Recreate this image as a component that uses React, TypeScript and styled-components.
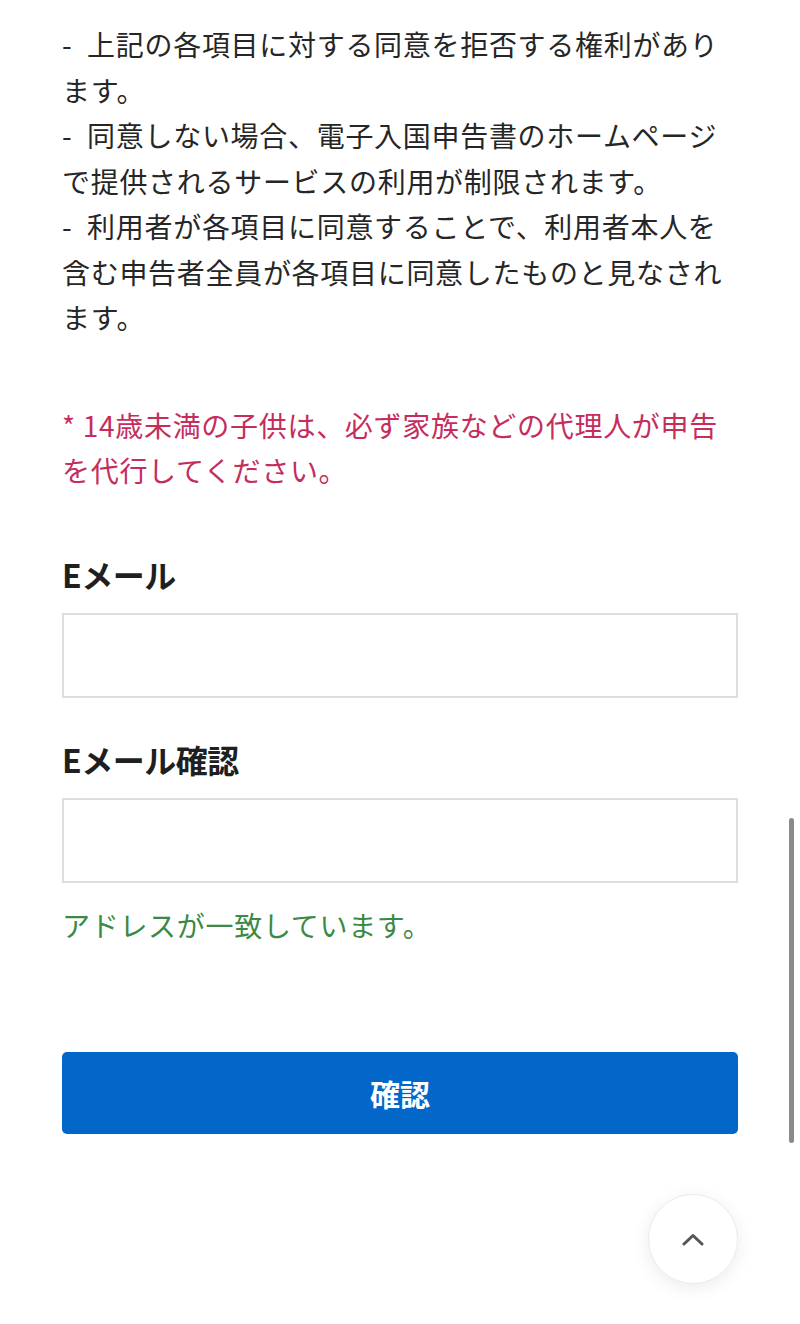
import React, { useState } from 'react';
import styled, { createGlobalStyle } from 'styled-components';

const GlobalStyle = createGlobalStyle`
  html, body {
    margin: 0;
    padding: 0;
    background: #ffffff;
  }
  body {
    font-family: "Noto Sans CJK JP", "Noto Sans", sans-serif;
    color: #222222;
  }
`;

const Page = styled.main`
  position: relative;
  min-height: 1324px;
  box-sizing: border-box;
  padding: 22px 62px 0;
`;

const Notice = styled.div`
  margin: 0;
  font-size: 28px;
  letter-spacing: 0.7px;
  line-height: 45.5px;
  color: #262626;
`;

const Item = styled.p`
  margin: 0;
`;

const Warning = styled.p`
  margin: 62px 0 0;
  font-size: 28px;
  letter-spacing: 0.7px;
  line-height: 45.5px;
  color: #c42d5c;
`;

const Field = styled.div<{ $top: number }>`
  display: flex;
  flex-direction: column;
  gap: 17px;
  margin-top: ${(p) => p.$top}px;
`;

const Label = styled.label`
  font-size: 32px;
  font-weight: 700;
  line-height: 44px;
  letter-spacing: -0.5px;
  color: #1f1f1f;
`;

const Input = styled.input`
  box-sizing: border-box;
  width: 100%;
  height: 85px;
  border: 2px solid #dedede;
  border-radius: 0;
  padding: 0 18px;
  font-size: 28px;
  font-family: inherit;
  outline: none;
  background: #fff;
`;

const Match = styled.p`
  margin: 20px 0 0;
  font-size: 28px;
  letter-spacing: 0.7px;
  line-height: 45px;
  color: #3a8a45;
`;

const SubmitButton = styled.button`
  display: flex;
  align-items: center;
  justify-content: center;
  width: 100%;
  height: 82px;
  margin-top: 104px;
  border: none;
  border-radius: 5px;
  background: #0366c9;
  color: #ffffff;
  font-family: inherit;
  font-size: 30px;
  font-weight: 700;
  cursor: pointer;
`;

const ScrollBar = styled.div`
  position: absolute;
  top: 818px;
  right: 6px;
  width: 5px;
  height: 325px;
  border-radius: 3px;
  background: #8a8a8a;
`;

const TopButton = styled.button`
  position: absolute;
  top: 1194px;
  right: 62px;
  width: 90px;
  height: 90px;
  border-radius: 50%;
  border: 1px solid #ececec;
  background: #ffffff;
  box-shadow: 0 4px 18px rgba(0, 0, 0, 0.08);
  display: flex;
  align-items: center;
  justify-content: center;
  padding: 0;
  cursor: pointer;
`;

function ChevronUp() {
  return (
    <svg width="24" height="14" viewBox="0 0 24 14" fill="none">
      <path d="M3 12 L12 3.5 L21 12" stroke="#555" strokeWidth="3" strokeLinecap="round" strokeLinejoin="round" />
    </svg>
  );
}

// the dash in the original is followed by a wide gap, so pad with an en space
const notices = [
  '-\u2002上記の各項目に対する同意を拒否する権利があります。',
  '-\u2002同意しない場合、電子入国申告書のホームページで提供されるサービスの利用が制限されます。',
  '-\u2002利用者が各項目に同意することで、利用者本人を含む申告者全員が各項目に同意したものと見なされます。',
];

export default function App() {
  const [email, setEmail] = useState('');
  const [confirm, setConfirm] = useState('');

  return (
    <>
      <GlobalStyle />
      <Page>
        <Notice>
          {notices.map((text) => (
            <Item key={text}>{text}</Item>
          ))}
        </Notice>
        <Warning>* 14歳未満の子供は、必ず家族などの代理人が申告を代行してください。</Warning>

        <Field $top={58}>
          <Label htmlFor="email">Eメール</Label>
          <Input id="email" type="email" value={email} onChange={(e) => setEmail(e.target.value)} />
        </Field>
        <Field $top={39}>
          <Label htmlFor="email-confirm">Eメール確認</Label>
          <Input id="email-confirm" type="email" value={confirm} onChange={(e) => setConfirm(e.target.value)} />
        </Field>
        <Match>アドレスが一致しています。</Match>

        <SubmitButton type="button">確認</SubmitButton>

        <ScrollBar />
        <TopButton type="button" aria-label="ページの先頭へ">
          <ChevronUp />
        </TopButton>
      </Page>
    </>
  );
}
